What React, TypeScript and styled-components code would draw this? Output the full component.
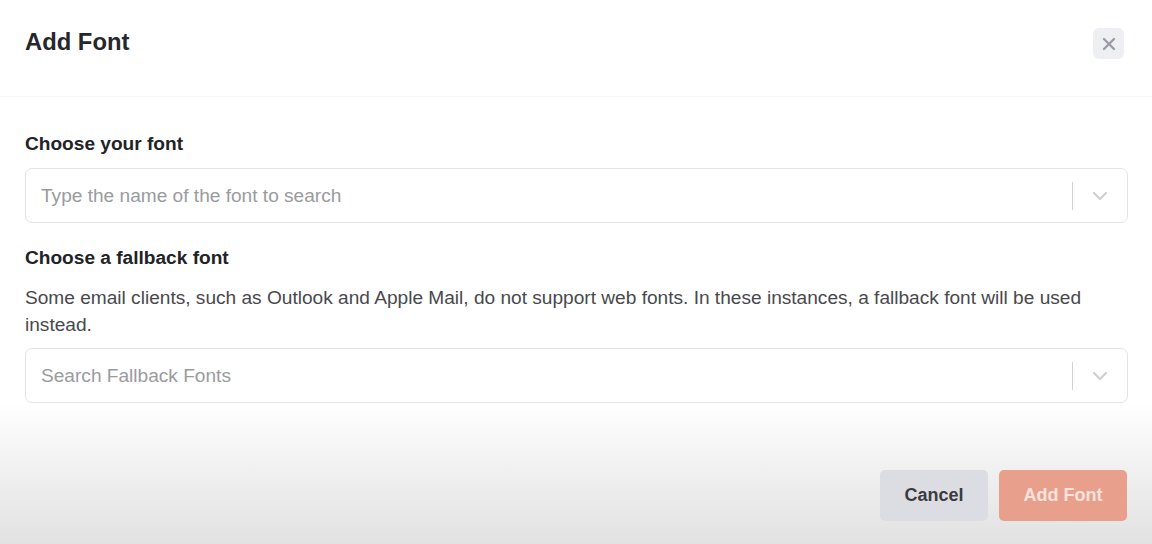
import styled, { createGlobalStyle } from "styled-components";

const GlobalStyle = createGlobalStyle`
  html, body {
    margin: 0;
    padding: 0;
    background: #ffffff;
  }
  * {
    box-sizing: border-box;
  }
`;

const Modal = styled.div`
  width: 1152px;
  height: 544px;
  display: flex;
  flex-direction: column;
  background: #ffffff;
  font-family: "Liberation Sans", Arial, sans-serif;
  overflow: hidden;
`;

const Header = styled.div`
  height: 97px;
  flex-shrink: 0;
  display: flex;
  justify-content: space-between;
  align-items: flex-start;
  padding: 27px 28px 0 25px;
  border-bottom: 1px solid #f7f7f7;
`;

const Title = styled.h1`
  margin: 0;
  font-size: 23.8px;
  line-height: 30px;
  font-weight: 700;
  color: #26272b;
`;

const CloseButton = styled.button`
  width: 31px;
  height: 31px;
  margin-top: 1px;
  border: none;
  border-radius: 6px;
  background: #eeeff2;
  display: flex;
  align-items: center;
  justify-content: center;
  padding: 0;
  cursor: pointer;
`;

const Body = styled.div`
  padding: 35px 24px 0 25px;
  display: flex;
  flex-direction: column;
`;

const Label = styled.div<{ $gap?: number }>`
  font-size: 19.1px;
  line-height: 24px;
  font-weight: 700;
  color: #222326;
  margin-top: ${(p) => p.$gap ?? 0}px;
`;

const Description = styled.p`
  margin: 14px 0 0;
  font-size: 19.1px;
  line-height: 27px;
  color: #48494c;
  padding-right: 40px;
`;

const SelectBox = styled.div<{ $gap: number }>`
  margin-top: ${(p) => p.$gap}px;
  height: 55px;
  border: 1px solid #e4e4e6;
  border-radius: 7px;
  background: #ffffff;
  display: flex;
  align-items: center;
  padding-left: 15px;
`;

const SearchInput = styled.input`
  flex: 1;
  border: none;
  outline: none;
  background: transparent;
  font-family: "Liberation Sans", Arial, sans-serif;
  font-size: 19.1px;
  color: #333;
  padding: 0;
  &::placeholder {
    color: #9a9b9e;
  }
`;

const Indicators = styled.div`
  display: flex;
  align-items: center;
  height: 100%;
`;

const Separator = styled.span`
  width: 1.5px;
  height: 28px;
  background: #d3d3d5;
`;

const Chevron = styled.span`
  width: 54px;
  display: flex;
  align-items: center;
  justify-content: center;
`;

const Footer = styled.div`
  flex: 1;
  display: flex;
  justify-content: flex-end;
  align-items: flex-start;
  gap: 11px;
  padding: 67px 25px 0 0;
  background: linear-gradient(
    to bottom,
    #ffffff 0%,
    #fbfbfb 14%,
    #eeeeee 55%,
    #e2e2e2 100%
  );
`;

const Button = styled.button<{ $primary?: boolean }>`
  height: 51px;
  padding: 0;
  width: ${(p) => (p.$primary ? 128 : 108)}px;
  border: none;
  border-radius: 5px;
  font-family: "Liberation Sans", Arial, sans-serif;
  font-size: 18px;
  font-weight: 700;
  background: ${(p) => (p.$primary ? "#e8a08c" : "#dcdde2")};
  color: ${(p) => (p.$primary ? "#fbe3dc" : "#3a3b40")};
  cursor: pointer;
`;

const ChevronIcon = () => (
  <svg width="16" height="10" viewBox="0 0 16 10" fill="none">
    <path
      d="M2 2 L8 8 L14 2"
      stroke="#cfcfd2"
      strokeWidth="2.2"
      strokeLinecap="round"
      strokeLinejoin="round"
    />
  </svg>
);

const Select = ({ placeholder, gap }: { placeholder: string; gap: number }) => (
  <SelectBox $gap={gap}>
    <SearchInput placeholder={placeholder} />
    <Indicators>
      <Separator />
      <Chevron>
        <ChevronIcon />
      </Chevron>
    </Indicators>
  </SelectBox>
);

export default function App() {
  return (
    <>
      <GlobalStyle />
      <Modal>
        <Header>
          <Title>Add Font</Title>
          <CloseButton aria-label="Close">
            <svg width="14" height="14" viewBox="0 0 14 14" fill="none">
              <path
                d="M2 2 L12 12 M12 2 L2 12"
                stroke="#9b9da6"
                strokeWidth="2.4"
                strokeLinecap="round"
              />
            </svg>
          </CloseButton>
        </Header>
        <Body>
          <Label>Choose your font</Label>
          <Select placeholder="Type the name of the font to search" gap={12} />
          <Label $gap={23}>Choose a fallback font</Label>
          <Description>
            Some email clients, such as Outlook and Apple Mail, do not support
            web fonts. In these instances, a fallback font will be used instead.
          </Description>
          <Select placeholder="Search Fallback Fonts" gap={10} />
        </Body>
        <Footer>
          <Button>Cancel</Button>
          <Button $primary>Add Font</Button>
        </Footer>
      </Modal>
    </>
  );
}
